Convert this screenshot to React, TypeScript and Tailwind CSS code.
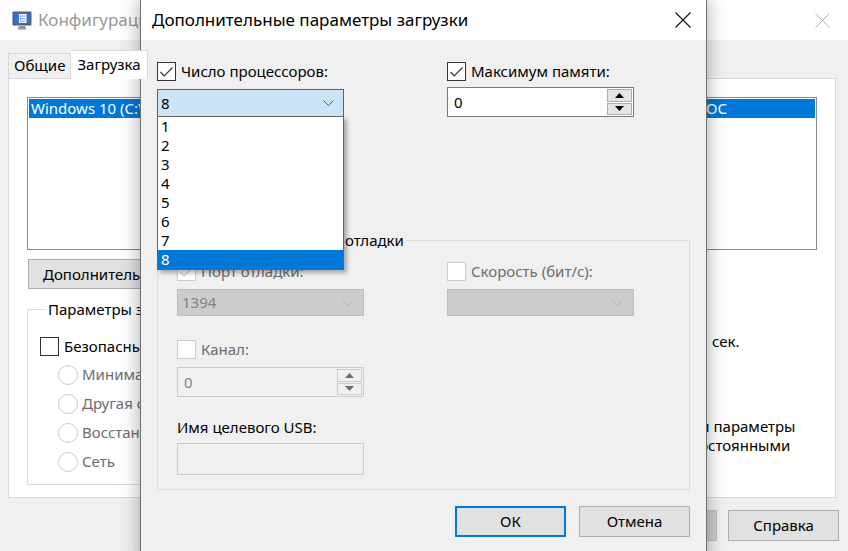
import type { ReactNode } from "react";

const FONT = "font-['Noto_Sans',sans-serif]";

function Box({ checked = false, disabled = false }: { checked?: boolean; disabled?: boolean }) {
  return (
    <span
      className={`flex h-[19px] w-[19px] shrink-0 items-center justify-center border bg-white ${
        disabled ? "border-[#cccccc]" : "border-[#333333]"
      }`}
    >
      {checked && (
        <svg width="15" height="12" viewBox="0 0 15 12">
          <path d="M1.5 6 L5.2 9.8 L13.5 1.5" fill="none" stroke={disabled ? "#cccccc" : "#333333"} strokeWidth="1.2" />
        </svg>
      )}
    </span>
  );
}

function CheckLabel({ label, checked, disabled, className = "" }: { label: string; checked?: boolean; disabled?: boolean; className?: string }) {
  return (
    <div className={`flex h-[19px] items-center gap-[5px] ${className}`}>
      <Box checked={checked} disabled={disabled} />
      <span className={`whitespace-nowrap ${disabled ? "text-[#6d6d6d]" : ""}`}>{label}</span>
    </div>
  );
}

function Chevron({ color }: { color: string }) {
  return (
    <svg width="11" height="6" viewBox="0 0 11 6" className="ml-auto">
      <path d="M0.5 0.5 L5.5 5.5 L10.5 0.5" fill="none" stroke={color} strokeWidth="1" />
    </svg>
  );
}

function DisabledCombo({ value }: { value?: string }) {
  return (
    <div className="flex h-[27px] w-[187px] items-center border border-[#bfbfbf] bg-[#cccccc] pl-[4px] pr-[10px] text-[#838383]">
      {value}
      <Chevron color="#b0b0b0" />
    </div>
  );
}

function Arrow({ up, color }: { up?: boolean; color: string }) {
  return (
    <svg width="9" height="5" viewBox="0 0 9 5">
      <path d={up ? "M0 5 L4.5 0 L9 5 Z" : "M0 0 L4.5 5 L9 0 Z"} fill={color} />
    </svg>
  );
}

function Spin({ value, disabled }: { value: string; disabled?: boolean }) {
  const btn = disabled ? "border-[#cccccc] bg-[#f0f0f0]" : "border-[#adadad] bg-[#e5e5e5]";
  const arrow = disabled ? "#6d6d6d" : "#000000";
  return (
    <div
      className={`flex h-[30px] w-[187px] border ${
        disabled ? "border-[#cccccc] bg-[#f0f0f0] text-[#838383]" : "border-[#7a7a7a] bg-white"
      }`}
    >
      <div className="flex flex-1 items-center pl-[6px]">{value}</div>
      <div className="flex w-[26px] flex-col gap-[1px] py-[1px] pr-[1px]">
        <div className={`flex flex-1 items-center justify-center border ${btn}`}>
          <Arrow up color={arrow} />
        </div>
        <div className={`flex flex-1 items-center justify-center border ${btn}`}>
          <Arrow color={arrow} />
        </div>
      </div>
    </div>
  );
}

function Button({ children, primary, disabled }: { children?: ReactNode; primary?: boolean; disabled?: boolean }) {
  return (
    <div
      className={`flex h-[31px] w-[111px] items-center justify-center ${
        primary
          ? "border-2 border-[#0078d7] bg-[#e1e1e1]"
          : disabled
          ? "border border-[#bfbfbf] bg-[#cccccc] text-[#838383]"
          : "border border-[#adadad] bg-[#e1e1e1]"
      }`}
    >
      {children}
    </div>
  );
}

function Radio({ label }: { label: string }) {
  return (
    <div className="flex h-[29px] items-center gap-[4px] pl-[18px]">
      <span className="h-[20px] w-[20px] shrink-0 rounded-full border border-[#cccccc] bg-white" />
      <span className="whitespace-nowrap text-[#6d6d6d]">{label}</span>
    </div>
  );
}

function AppIcon() {
  return (
    <svg width="20" height="19" viewBox="0 0 20 19">
      <rect x="0.5" y="0.5" width="19" height="14" rx="1" fill="#4d5f7c" />
      <rect x="2" y="2" width="16" height="11" fill="#2f6fd6" />
      <rect x="7" y="3" width="7.5" height="9" fill="#f3f7ff" />
      <rect x="8" y="4.5" width="1.5" height="1.2" fill="#2f6fd6" />
      <rect x="10.2" y="4.6" width="3.3" height="1" fill="#8aa6d8" />
      <rect x="8" y="7" width="1.5" height="1.2" fill="#2f6fd6" />
      <rect x="10.2" y="7.1" width="3.3" height="1" fill="#8aa6d8" />
      <rect x="8" y="9.5" width="1.5" height="1.2" fill="#2f6fd6" />
      <rect x="10.2" y="9.6" width="3.3" height="1" fill="#8aa6d8" />
      <path d="M7 15 H13 L14.5 18.5 H5.5 Z" fill="#8a93a3" />
    </svg>
  );
}

function MainWindow() {
  return (
    <div className="flex h-full flex-col">
      <div className="flex h-[40px] shrink-0 items-center bg-white pl-[12px] pr-[18px]">
        <AppIcon />
        <span className="ml-[6px] text-[17px] text-[#999999]">Конфигурация системы</span>
        <svg className="ml-auto" width="15" height="15" viewBox="0 0 15 15">
          <path d="M0.5 0.5 L14.5 14.5 M14.5 0.5 L0.5 14.5" stroke="#b4b4b4" strokeWidth="1" />
        </svg>
      </div>

      <div className="flex h-[38px] items-end px-[8px]">
        <div className="h-[25px] border border-b-0 border-[#d9d9d9] px-[5px] leading-[23px]">Общие</div>
        <div className="relative z-10 -mb-px h-[29px] border border-b-0 border-l-0 border-[#d9d9d9] bg-white px-[6px] leading-[27px]">
          Загрузка
        </div>
      </div>

      <div className="mx-[8px] flex h-[420px] w-[828px] flex-col border border-[#d9d9d9] bg-white">
        <div className="mx-[18px] mt-[18px] h-[153px] border border-[#828790] p-[1px]">
          <div className="flex h-[19px] items-center bg-[#0078d7] pl-[2px] leading-[19px] text-white">
            <span className="w-[675px] overflow-hidden whitespace-nowrap">Windows 10 (C:\Windows) : Текущая ОС; ОС по умолчанию</span>
            <span>ОС</span>
          </div>
        </div>

        <div className="ml-[19px] mt-[9px] flex h-[30px] w-[250px] items-center whitespace-nowrap border border-[#adadad] bg-[#e1e1e1] pl-[14px]">
          Дополнительные параметры...
        </div>

        <div className="mt-[10px] flex">
          <fieldset className="ml-[18px] h-[186px] w-[360px] border border-[#dcdcdc] pl-[12px]">
            <legend className="ml-[6px] px-[2px] leading-[20px]">Параметры загрузки</legend>
            <CheckLabel label="Безопасный режим" className="mt-[18px]" />
            <div className="mt-[4px] flex flex-col">
              <Radio label="Минимальная" />
              <Radio label="Другая оболочка" />
              <Radio label="Восстановление Active Directory" />
              <Radio label="Сеть" />
            </div>
          </fieldset>

          <div className="ml-[173px] flex flex-col">
            <div className="mt-[30px] flex h-[24px] items-center">
              <span className="w-[72px]">Таймаут:</span>
              <span className="flex h-[24px] w-[72px] items-center border border-[#7a7a7a] pl-[4px]">30</span>
              <span className="ml-[8px]">сек.</span>
            </div>
            <div className="mt-[64px] flex items-start gap-[4px] pl-[40px]">
              <Box />
              <span className="leading-[19px]">
                Сделать эти параметры
                <br />
                загрузки постоянными
              </span>
            </div>
          </div>
        </div>
      </div>

      <div className="mt-[12px] flex justify-end gap-[11px] pr-[9px]">
        <Button>ОК</Button>
        <Button>Отмена</Button>
        <Button disabled>Применить</Button>
        <Button>Справка</Button>
      </div>
    </div>
  );
}

function BootDialog() {
  const items = ["1", "2", "3", "4", "5", "6", "7", "8"];
  return (
    <div className="absolute left-[140px] top-[-1px] flex h-[570px] w-[567px] flex-col border border-[#707070] bg-[#f0f0f0] shadow-[0_0_18px_rgba(0,0,0,0.35)]">
      <div className="flex h-[40px] shrink-0 items-center bg-white pl-[11px] pr-[15px]">
        <span className="text-[17px]">Дополнительные параметры загрузки</span>
        <svg className="ml-auto" width="16" height="16" viewBox="0 0 16 16">
          <path d="M0.5 0.5 L15.5 15.5 M15.5 0.5 L0.5 15.5" stroke="#111111" strokeWidth="1.1" />
        </svg>
      </div>

      <div className="flex flex-col px-[16px]">
        <div className="mt-[22px] grid grid-cols-[187px_187px] gap-x-[103px]">
          <div>
            <CheckLabel checked label="Число процессоров:" />
            <div className="relative z-20 mt-[8px]">
              <div className="flex h-[28px] items-center border border-[#0078d7] bg-[#cce4f7] pl-[3px] pr-[9px]">
                8
                <Chevron color="#555555" />
              </div>
              <div className="absolute left-0 top-[27px] w-[187px] border border-[#646464] bg-white shadow-[3px_3px_4px_rgba(0,0,0,0.3)]">
                {items.map((n) => (
                  <div
                    key={n}
                    className={`h-[19px] pl-[3px] leading-[19px] ${n === "8" ? "bg-[#0078d7] text-white" : ""}`}
                  >
                    {n}
                  </div>
                ))}
              </div>
            </div>
          </div>
          <div>
            <CheckLabel checked label="Максимум памяти:" />
            <div className="mt-[6px]">
              <Spin value="0" />
            </div>
          </div>
        </div>

        <div className="flex h-[113px] flex-col gap-[18px] pt-[30px]">
          <CheckLabel label="Блокировка PCI" />
          <CheckLabel label="Отладка" />
        </div>

        <fieldset className="h-[260px] w-[533px] border border-[#dcdcdc] pl-[19px]">
          <legend className="ml-[6px] whitespace-nowrap px-[2px] leading-[20px]">
            <span className="text-[13.5px]">Глобальные параметры </span>отладки
          </legend>
          <div className="mt-[11px] grid grid-cols-[187px_187px] gap-x-[83px]">
            <div>
              <CheckLabel checked disabled label="Порт отладки:" />
              <div className="mt-[8px]">
                <DisabledCombo value="1394" />
              </div>
              <CheckLabel disabled label="Канал:" className="mt-[24px]" />
              <div className="mt-[8px]">
                <Spin value="0" disabled />
              </div>
            </div>
            <div>
              <CheckLabel disabled label="Скорость (бит/с):" />
              <div className="mt-[8px]">
                <DisabledCombo />
              </div>
            </div>
          </div>
          <div className="mt-[20px] leading-[20px]">Имя целевого USB:</div>
          <div className="mt-[6px] h-[32px] w-[187px] border border-[#cccccc] bg-[#f0f0f0]" />
        </fieldset>

        <div className="mt-[16px] flex justify-end gap-[13px]">
          <Button primary>ОК</Button>
          <Button>Отмена</Button>
        </div>
      </div>
    </div>
  );
}

export default function App() {
  return (
    <div className={`relative h-[551px] w-[848px] overflow-hidden bg-[#f0f0f0] text-[15px] text-black ${FONT}`}>
      <MainWindow />
      <BootDialog />
    </div>
  );
}
